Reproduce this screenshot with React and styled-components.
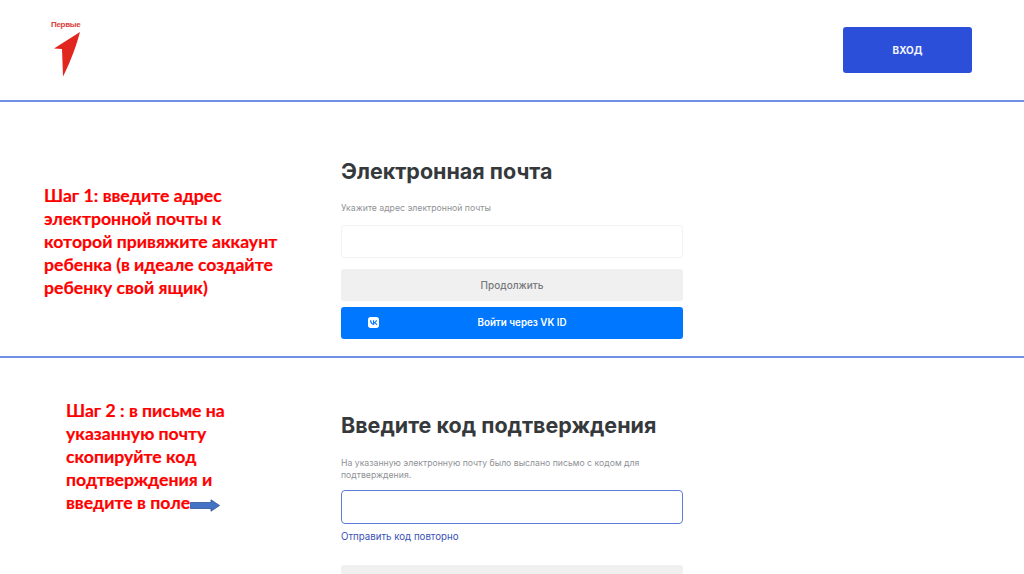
import styled, { createGlobalStyle } from "styled-components";

const GlobalStyle = createGlobalStyle`
  html, body {
    margin: 0;
    padding: 0;
    background: #fff;
  }
  * {
    box-sizing: border-box;
  }
`;

function App() {
  return (
    <>
      <GlobalStyle />
      <Page>
        <Header>
          <Logo>
            <LogoText>Первые</LogoText>
            <svg width="28" height="46" viewBox="0 0 28 46">
              <path d="M27 1 L1 17.5 L9 18 L10 45.5 C14 38 22 20 27 1 Z" fill="#e0261f" />
            </svg>
          </Logo>
          <LoginButton>ВХОД</LoginButton>
        </Header>

        <Section $height={256}>
          <Hint $indent={44} $top={82}>
            Шаг 1: введите адрес
            <br />
            электронной почты к
            <br />
            которой привяжите аккаунт
            <br />
            ребенка (в идеале создайте
            <br />
            ребенку свой ящик)
          </Hint>
          <Form $top={56}>
            <Title>Электронная почта</Title>
            <Label>Укажите адрес электронной почты</Label>
            <Field />
            <SubmitButton>Продолжить</SubmitButton>
            <VkButton>
              <svg width="11" height="11" viewBox="0 0 24 24">
                <rect width="24" height="24" rx="6" fill="#fff" />
                <path
                  d="M13.1 17.3c-5.5 0-8.6-3.8-8.7-10h2.7c.1 4.6 2.1 6.5 3.7 6.9V7.3h2.6v4c1.6-.2 3.2-2 3.8-4h2.6c-.4 2.5-2.3 4.3-3.6 5 1.3.6 3.4 2.2 4.2 5h-2.8c-.6-1.9-2.1-3.3-4.1-3.5v3.5z"
                  fill="#07f"
                />
              </svg>
              <VkLabel>Войти через VK ID</VkLabel>
            </VkButton>
          </Form>
        </Section>

        <Section $last>
          <Hint $indent={66} $top={41}>
            Шаг 2 : в письме на
            <br />
            указанную почту
            <br />
            скопируйте код
            <br />
            подтверждения и
            <br />
            введите в поле
            <StepArrow width="30" height="13" viewBox="0 0 30 13">
              <path
                d="M0.5 3.5 H21 V0.8 L29.5 6.5 L21 12.2 V9.5 H0.5 Z"
                fill="#4472c4"
                stroke="#2f5597"
                strokeWidth="0.8"
              />
            </StepArrow>
          </Hint>
          <Form $top={54}>
            <Title>Введите код подтверждения</Title>
            <Label $spaced>
              На указанную электронную почту было выслано письмо с кодом для подтверждения.
            </Label>
            <Field $focused />
            <ResendLink>Отправить код повторно</ResendLink>
            <SubmitButton $cut />
          </Form>
        </Section>
      </Page>
    </>
  );
}

const Page = styled.div`
  height: 100vh;
  overflow: hidden;
  background: #fff;
  font-family: Inter, "Noto Sans", sans-serif;
`;

const Header = styled.header`
  height: 102px;
  border-bottom: 2px solid #6f90e6;
  padding: 20px 52px 0 53px;
  display: flex;
  justify-content: space-between;
  align-items: flex-start;
`;

const Logo = styled.div`
  display: flex;
  flex-direction: column;
  align-items: flex-start;
  gap: 2px;

  svg {
    display: block;
  }
`;

const LogoText = styled.span`
  font-family: "Liberation Sans", sans-serif;
  font-size: 8px;
  line-height: 9px;
  font-weight: 700;
  letter-spacing: -0.3px;
  color: #d8403a;
  margin-left: -2px;
`;

const LoginButton = styled.button`
  width: 129px;
  height: 46px;
  margin-top: 7px;
  border: none;
  border-radius: 3px;
  background: #2b4fd8;
  color: #f4f6ff;
  font-family: inherit;
  font-size: 10px;
  font-weight: 700;
`;

const Section = styled.section`
  height: ${(props) => (props.$height ? `${props.$height}px` : "auto")};
  border-bottom: ${(props) => (props.$last ? "none" : "2px solid #6f90e6")};
  display: grid;
  grid-template-columns: 341px 342px;
`;

const Hint = styled.div`
  padding: ${(props) => props.$top}px 0 0 ${(props) => props.$indent}px;
  font-family: Lato, "Open Sans", sans-serif;
  font-size: 17.65px;
  line-height: 23px;
  font-weight: 700;
  -webkit-text-stroke: 0.2px #f00;
  color: #f00;
  white-space: nowrap;
`;

const StepArrow = styled.svg`
  vertical-align: -3px;
`;

const Form = styled.div`
  padding-top: ${(props) => props.$top}px;
  display: flex;
  flex-direction: column;
`;

const Title = styled.h2`
  margin: 0;
  font-size: 21.5px;
  line-height: 27px;
  font-weight: 700;
  color: #36393c;
`;

const Label = styled.p`
  margin: ${(props) => (props.$spaced ? "19px 0 9px" : "18px 0 10px")};
  font-size: 8.7px;
  line-height: 11.5px;
  color: #8f9296;
`;

const Field = styled.div`
  height: ${(props) => (props.$focused ? "34px" : "33px")};
  border-radius: ${(props) => (props.$focused ? "4px" : "3px")};
  border: ${(props) => (props.$focused ? "1.5px solid #5f7cd8" : "1px solid #f3f3f3")};
  background: #fff;
`;

const SubmitButton = styled.button`
  display: block;
  width: 100%;
  height: 32px;
  margin-top: ${(props) => (props.$cut ? "22px" : "11px")};
  border: none;
  border-radius: 3px;
  background: #f0f0f0;
  color: #77797c;
  font-family: inherit;
  font-size: 10px;
  font-weight: 500;
  flex-shrink: 0;
`;

const VkButton = styled.button`
  width: 100%;
  height: 32px;
  margin-top: 6px;
  padding: 0 18px 0 27px;
  display: flex;
  align-items: center;
  border: none;
  border-radius: 3px;
  background: #0077ff;
  color: #fff;
  font-family: inherit;
`;

const VkLabel = styled.span`
  flex: 1;
  text-align: center;
  font-size: 9.8px;
  font-weight: 600;
`;

const ResendLink = styled.a`
  margin-top: 6px;
  font-size: 9.7px;
  line-height: 13px;
  color: #3a50b8;
`;

export default App;
